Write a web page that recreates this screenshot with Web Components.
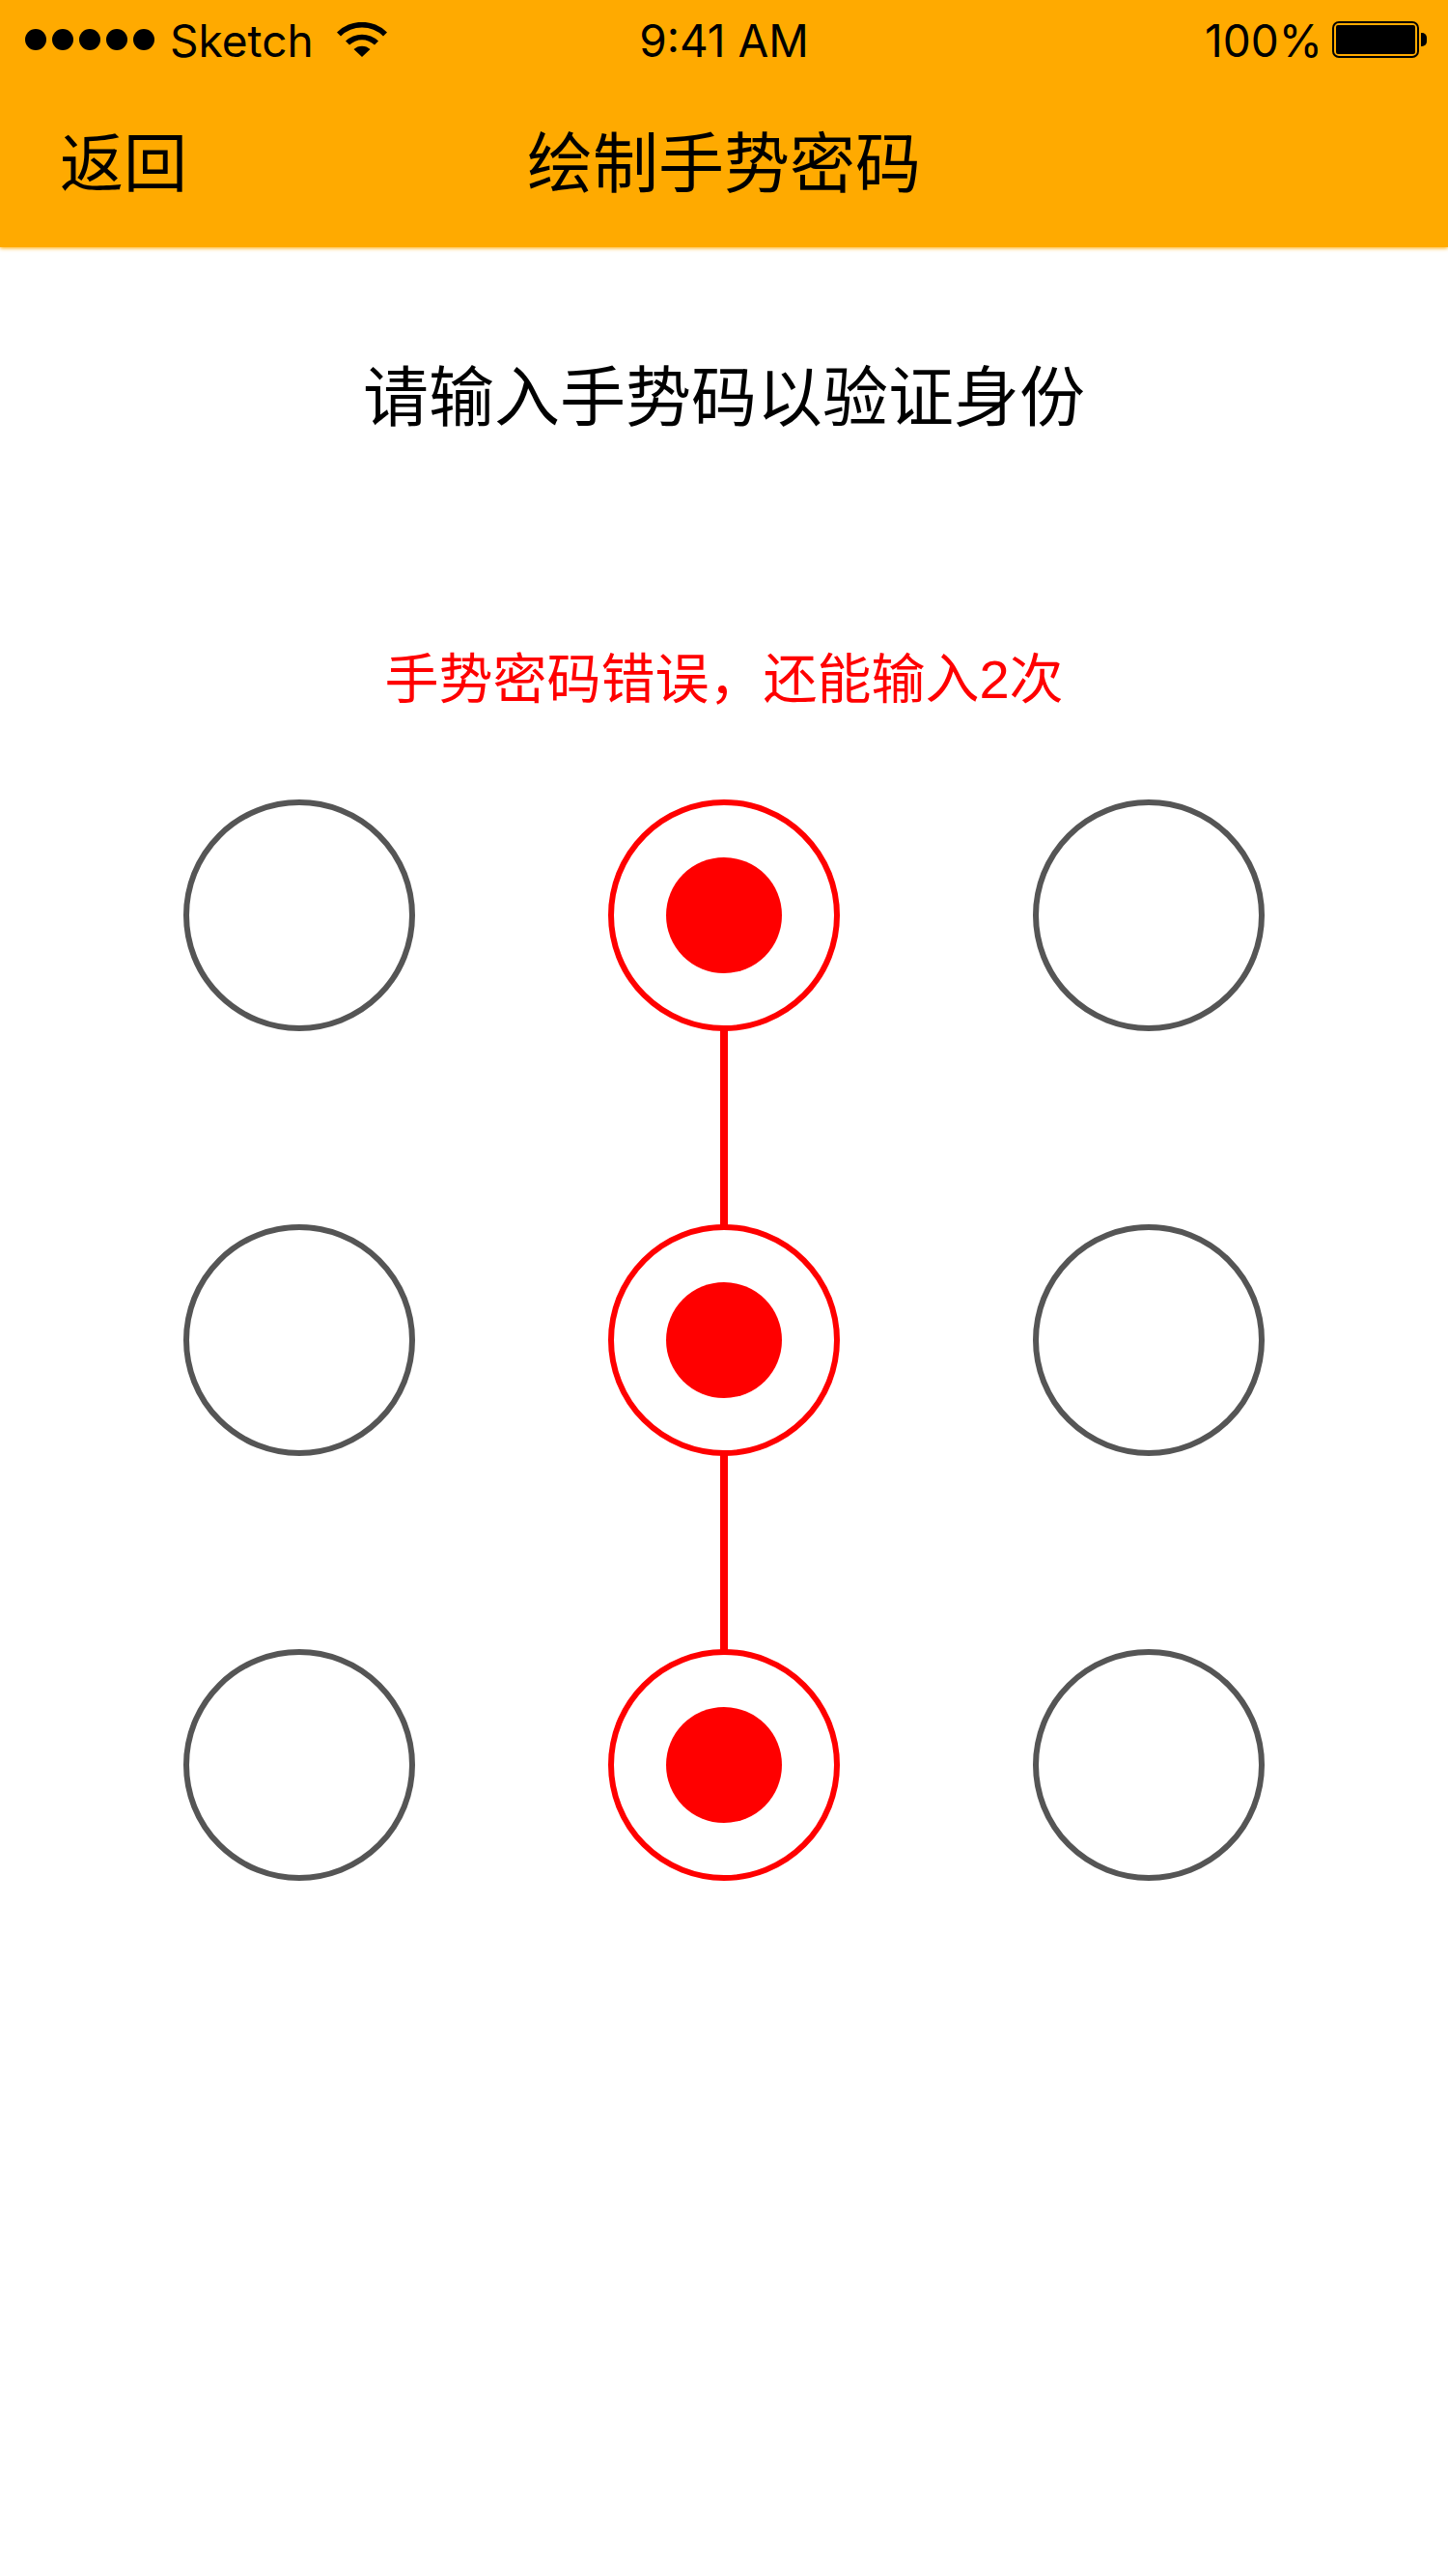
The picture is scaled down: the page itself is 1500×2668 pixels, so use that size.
<!DOCTYPE html>
<html lang="zh-CN">
<head>
<meta charset="utf-8">
<meta name="viewport" content="width=device-width">
<title>绘制手势密码</title>
<style>
  body { margin: 0; background: #fff; color: #000; font-family: "Liberation Sans", "Noto Sans CJK SC", sans-serif; }
</style>
</head>
<body>
<gesture-screen></gesture-screen>
<script>
const define = (name, html, setup) => {
  const template = document.createElement('template');
  template.innerHTML = html;
  customElements.define(name, class extends HTMLElement {
    constructor() {
      super();
      this.attachShadow({ mode: 'open' }).append(template.content.cloneNode(true));
    }
    connectedCallback() { if (setup) setup(this); }
  });
};

define('signal-dots', `
  <style>
    :host { display: flex; gap: 6px; }
    i { width: 22px; height: 22px; border-radius: 50%; background: #000; }
  </style>
  <i></i><i></i><i></i><i></i><i></i>`);

define('wifi-icon', `
  <style>:host, svg { display: block; }</style>
  <svg width="52" height="36" viewBox="0 0 52 36" aria-hidden="true">
    <path d="M0 10.5A37 37 0 0 1 52 10.5L48 14.5A31.5 31.5 0 0 0 4 14.5Z"/>
    <path d="M9 19.5A24.5 24.5 0 0 1 43 19.5L39 23.5A18.8 18.8 0 0 0 13 23.5Z"/>
    <path d="M17.5 28A12.4 12.4 0 0 1 34.5 28L26 36Z"/>
  </svg>`);

define('battery-icon', `
  <style>:host, svg { display: block; }</style>
  <svg width="98" height="38" viewBox="0 0 98 38" aria-hidden="true">
    <rect x="1" y="1" width="88" height="36" rx="6" fill="none" stroke="#000" stroke-width="2"/>
    <rect x="4" y="4" width="82" height="30" rx="2"/>
    <path d="M92 12h1a5 5 0 0 1 5 5v4a5 5 0 0 1-5 5h-1z"/>
  </svg>`);

define('status-bar', `
  <style>
    :host { display: grid; grid-template-columns: 1fr auto 1fr; align-items: center; height: 80px; padding: 2px 22px 0; box-sizing: border-box; font: 46px/76px Inter, sans-serif; }
    div { display: flex; align-items: center; }
    span, time { padding-top: 2px; }
    .start { padding-left: 4px; }
    .carrier { margin: 0 24px 0 16px; }
    .end { justify-content: flex-end; gap: 10px; }
  </style>
  <div class="start"><signal-dots></signal-dots><span class="carrier">Sketch</span><wifi-icon></wifi-icon></div>
  <time>9:41 AM</time>
  <div class="end"><span>100%</span><battery-icon></battery-icon></div>`);

define('nav-bar', `
  <style>
    :host { display: grid; grid-template-columns: 1fr auto 1fr; align-items: center; height: 176px; padding: 4px 62px 0; box-sizing: border-box; }
    ::slotted(h1) { margin: 0; font-size: 68px; line-height: 96px; font-weight: 400; }
    button { justify-self: start; padding: 0; border: 0; background: none; color: inherit; font-family: inherit; font-size: 66px; line-height: 96px; cursor: pointer; }
  </style>
  <button type="button">返回</button>
  <slot></slot>`);

define('pattern-node', `
  <style>
    :host { display: block; position: relative; width: 240px; height: 240px; }
    input { appearance: none; display: grid; place-items: center; width: 240px; height: 240px; margin: 0; box-sizing: border-box; border: 6px solid #555; border-radius: 50%; cursor: pointer; }
    input:checked { border-color: #f00; }
    input:checked::before { content: ""; width: 120px; height: 120px; border-radius: 50%; background: #f00; }
    :host([linked])::after { content: ""; position: absolute; top: calc(100% - 2px); left: calc(50% - 4px); width: 8px; height: calc(var(--node-gap) + 4px); background: #f00; }
  </style>
  <input type="checkbox">`, host => {
    const input = host.shadowRoot.querySelector('input');
    input.checked = host.hasAttribute('checked');
    input.setAttribute('aria-label', host.getAttribute('index'));
  });

define('pattern-lock', `
  <style>
    :host { --node-gap: 200px; display: grid; grid-template-columns: repeat(3, auto); justify-content: center; gap: var(--node-gap); }
  </style>
  <slot></slot>`);

define('gesture-screen', `
  <style>
    :host { display: block; }
    header { background: #ffaa00; box-shadow: 0 1px 4px #ffaa00; }
    main { display: flex; flex-direction: column; align-items: center; padding: 108px 0; }
    p { margin: 0; text-align: center; }
    .prompt { font-size: 68px; line-height: 96px; }
    .error { margin: 204px 0 84px; font-size: 56px; line-height: 80px; color: #f00; }
  </style>
  <header>
    <status-bar></status-bar>
    <nav-bar><h1>绘制手势密码</h1></nav-bar>
  </header>
  <main>
    <p class="prompt">请输入手势码以验证身份</p>
    <p class="error" role="alert">手势密码错误，还能输入2次</p>
    <pattern-lock>
      <pattern-node index="1"></pattern-node>
      <pattern-node index="2" checked linked></pattern-node>
      <pattern-node index="3"></pattern-node>
      <pattern-node index="4"></pattern-node>
      <pattern-node index="5" checked linked></pattern-node>
      <pattern-node index="6"></pattern-node>
      <pattern-node index="7"></pattern-node>
      <pattern-node index="8" checked></pattern-node>
      <pattern-node index="9"></pattern-node>
    </pattern-lock>
  </main>`);
</script>
</body>
</html>
